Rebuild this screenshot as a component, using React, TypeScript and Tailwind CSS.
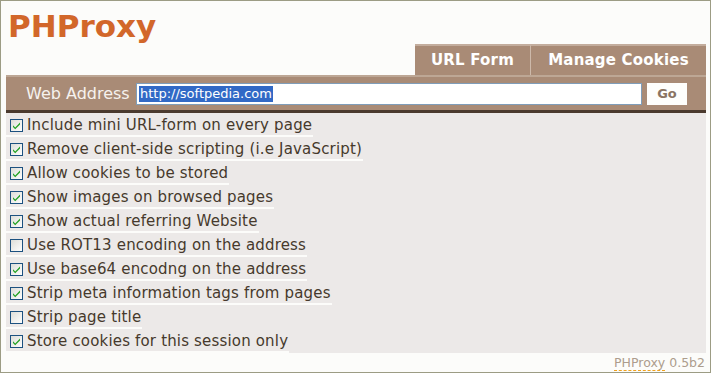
import React from "react";

const options: { label: string; checked: boolean }[] = [
  { label: "Include mini URL-form on every page", checked: true },
  { label: "Remove client-side scripting (i.e JavaScript)", checked: true },
  { label: "Allow cookies to be stored", checked: true },
  { label: "Show images on browsed pages", checked: true },
  { label: "Show actual referring Website", checked: true },
  { label: "Use ROT13 encoding on the address", checked: false },
  { label: "Use base64 encodng on the address", checked: true },
  { label: "Strip meta information tags from pages", checked: true },
  { label: "Strip page title", checked: false },
  { label: "Store cookies for this session only", checked: true },
];

function CheckBox({ checked }: { checked: boolean }) {
  return (
    <svg width="13" height="13" viewBox="0 0 13 13" className="shrink-0">
      <defs>
        <linearGradient id="cbg" x1="0" y1="0" x2="1" y2="1">
          <stop offset="0" stopColor="#dcdcd6" />
          <stop offset="1" stopColor="#ffffff" />
        </linearGradient>
      </defs>
      <rect x="0.5" y="0.5" width="12" height="12" fill="url(#cbg)" stroke="#1c5180" />
      {checked && (
        <path d="M3 6.2 L5.2 8.4 L10 3.6 L10 5.4 L5.2 10.2 L3 8 Z" fill="#21a121" />
      )}
    </svg>
  );
}

export default function App() {
  return (
    <div
      className="w-[711px] h-[373px] border border-[#9c9c84] bg-[#fcfcfa] pl-[5px] pr-[4px] pt-[7px] flex flex-col"
      style={{ fontFamily: '"DejaVu Sans", Verdana, sans-serif' }}
    >
      <div className="h-[36px] leading-[36px] text-[31px] font-bold text-[#d2672a] pl-[2px]">
        PHProxy
      </div>
      <div className="flex justify-end h-[31px]">
        <div className="w-[115px] border-t-2 border-[#c3ad9d] bg-[#a98b76] text-white font-bold text-[15px] leading-[29px] text-center tracking-[0.2px]">
          URL Form
        </div>
        <div className="w-[176px] border-t-2 border-l border-l-[#cdb9aa] border-t-[#c3ad9d] bg-[#a98b76] text-white font-bold text-[15px] leading-[29px] text-center tracking-[0.2px]">
          Manage Cookies
        </div>
      </div>
      <div className="h-[38px] bg-[#a98b76] border-t-2 border-t-[#bda795] border-b-[3px] border-b-[#4b3a2e] flex items-center">
        <span className="ml-[20px] text-[16px] text-[#f6f2ee] w-[110px]">Web Address</span>
        <div className="w-[506px] h-[22px] bg-white border border-[#7f9db9] flex items-center px-[2px]">
          <span className="bg-[#3169c6] text-white text-[13px] leading-[16px] px-[1px]">
            http://softpedia.com
          </span>
        </div>
        <div className="ml-[5px] w-[40px] h-[22px] bg-[#fefefc] flex items-center justify-center text-[13px] font-bold text-[#8a7463]">
          Go
        </div>
      </div>
      <div className="bg-[#ece9e8] flex flex-col">
        {options.map((o) => (
          <div key={o.label} className="h-[24px]">
            <div className="inline-flex items-center h-[24px] pt-[3px] border-b-2 border-[#fcfcfa] pl-[4px] pr-[1px] text-[15px] leading-[19px] tracking-[0.17px] text-[#46392c]">
              <CheckBox checked={o.checked} />
              <span className="ml-[4px] whitespace-nowrap">{o.label}</span>
            </div>
          </div>
        ))}
      </div>
      <div className="flex justify-end pt-[2px] pr-[1px] text-[12.5px] text-[#ad9d8d] leading-[15px]">
        <span className="border-b border-dashed border-[#f2a21c]">PHProxy</span>
        <span>&nbsp;0.5b2</span>
      </div>
    </div>
  );
}
